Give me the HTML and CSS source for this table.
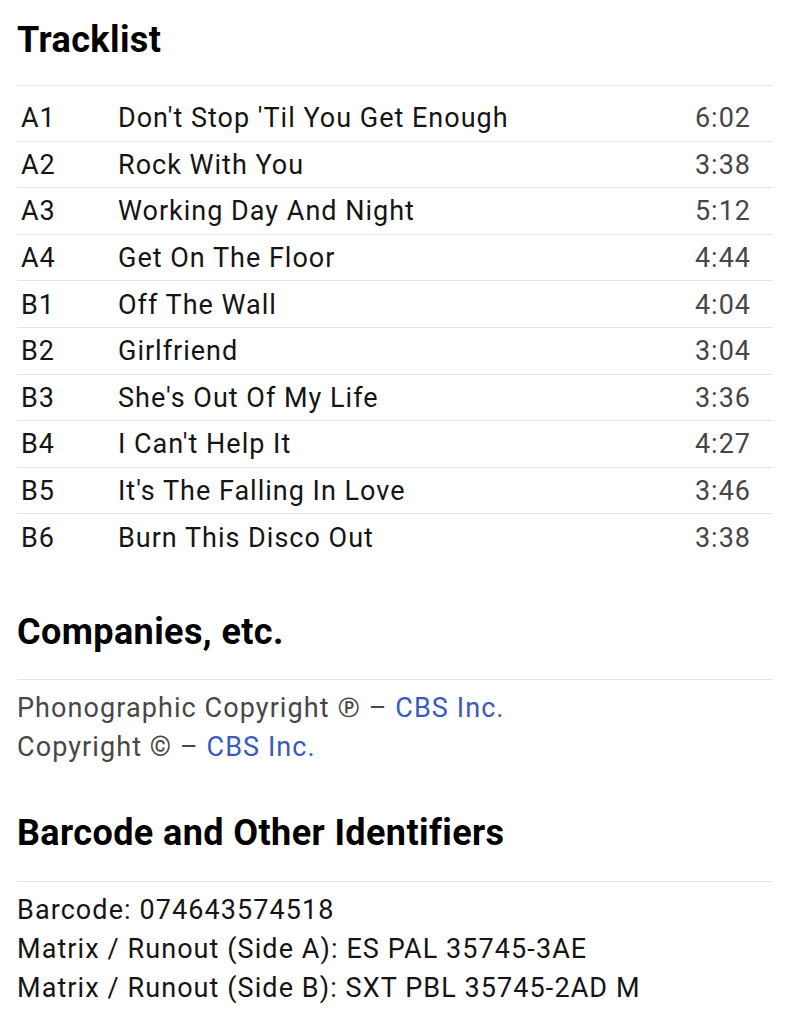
FILE: index.html
```html
<!DOCTYPE html>
<html lang="en">
<head>
<meta charset="utf-8">
<title>Tracklist</title>
<link rel="stylesheet" href="styles.css">
</head>
<body>
<main class="page">
  <section class="section section-tracklist">
    <h2 class="heading">Tracklist</h2>
    <div class="tracklist">
      <div class="track"><span class="pos">A1</span><span class="title">Don't Stop 'Til You Get Enough</span><span class="dur">6:02</span></div>
      <div class="track"><span class="pos">A2</span><span class="title">Rock With You</span><span class="dur">3:38</span></div>
      <div class="track"><span class="pos">A3</span><span class="title">Working Day And Night</span><span class="dur">5:12</span></div>
      <div class="track"><span class="pos">A4</span><span class="title">Get On The Floor</span><span class="dur">4:44</span></div>
      <div class="track"><span class="pos">B1</span><span class="title">Off The Wall</span><span class="dur">4:04</span></div>
      <div class="track"><span class="pos">B2</span><span class="title">Girlfriend</span><span class="dur">3:04</span></div>
      <div class="track"><span class="pos">B3</span><span class="title">She's Out Of My Life</span><span class="dur">3:36</span></div>
      <div class="track"><span class="pos">B4</span><span class="title">I Can't Help It</span><span class="dur">4:27</span></div>
      <div class="track"><span class="pos">B5</span><span class="title">It's The Falling In Love</span><span class="dur">3:46</span></div>
      <div class="track"><span class="pos">B6</span><span class="title">Burn This Disco Out</span><span class="dur">3:38</span></div>
    </div>
  </section>

  <section class="section section-companies">
    <h2 class="heading">Companies, etc.</h2>
    <ul class="list">
      <li>Phonographic Copyright ℗ – <a class="link" href="#">CBS Inc.</a></li>
      <li>Copyright © – <a class="link" href="#">CBS Inc.</a></li>
    </ul>
  </section>

  <section class="section section-ids">
    <h2 class="heading">Barcode and Other Identifiers</h2>
    <ul class="list list-dark">
      <li>Barcode: 074643574518</li>
      <li>Matrix / Runout (Side A): ES PAL 35745-3AE</li>
      <li>Matrix / Runout (Side B): SXT PBL 35745-2AD M</li>
    </ul>
  </section>
</main>
</body>
</html>
```

FILE: styles.css
```css
* { box-sizing: border-box; }

html, body {
  margin: 0;
  padding: 0;
  background: #ffffff;
}

body {
  font-family: Roboto, "Noto Sans", "Liberation Sans", sans-serif;
  color: #1a1a1a;
}

.page {
  width: 772px;
  padding-left: 17px;
}

.heading {
  margin: 0;
  font-size: 36px;
  line-height: 40px;
  font-weight: 700;
  letter-spacing: 0.4px;
  color: #000;
  padding-top: 20px;
  padding-bottom: 25px;
  border-bottom: 1px solid #e4e4e4;
}

.section-companies {
  margin-top: 51px;
}

.section-companies .heading {
  padding-top: 0;
  padding-bottom: 27px;
}

.section-ids {
  margin-top: 46px;
}

.section-ids .heading {
  padding-top: 0;
  padding-bottom: 28px;
}

.tracklist {
  margin-top: 9px;
  display: flex;
  flex-direction: column;
}

.track {
  display: grid;
  grid-template-columns: 97px 1fr auto;
  align-items: center;
  height: 46.6px;
  padding: 1px 22px 0 4px;
  font-size: 27px;
  line-height: 32px;
  letter-spacing: 1px;
  color: #151515;
  border-bottom: 1px solid #e4e4e4;
}

.track:last-child {
  border-bottom: none;
}

.dur {
  color: #474747;
  text-align: right;
  margin-right: -1px;
}

.list {
  list-style: none;
  margin: 0;
  padding: 9px 0 0 0;
  font-size: 27px;
  line-height: 39px;
  letter-spacing: 1.08px;
  color: #474747;
}

.list-dark {
  color: #151515;
}

.link {
  color: #3a5bbd;
  text-decoration: none;
}
```
